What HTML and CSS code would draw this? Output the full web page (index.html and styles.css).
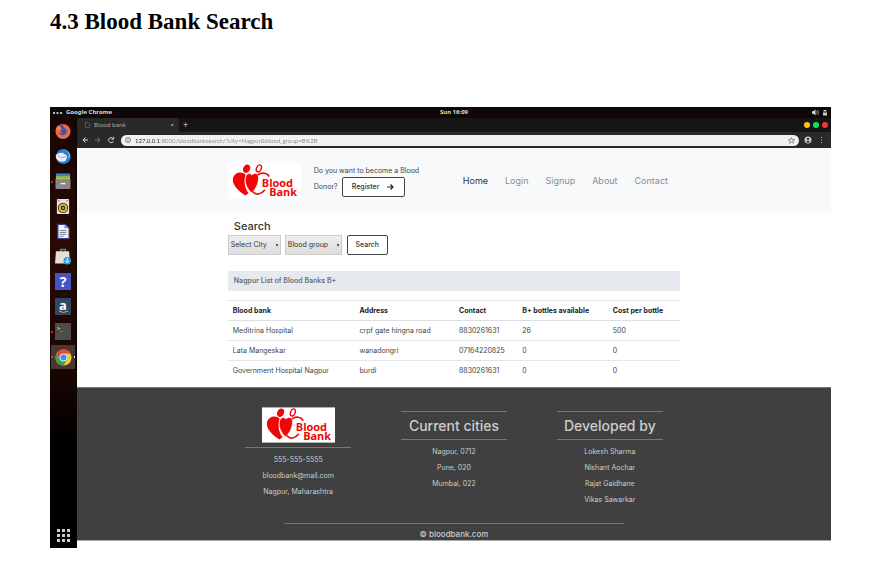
FILE: index.html
```html
<!DOCTYPE html>
<html lang="en">
<head>
<meta charset="utf-8">
<title>Blood Bank Search</title>
<link rel="stylesheet" href="styles.css">
</head>
<body>
<svg class="defs" aria-hidden="true">
  <symbol id="logo" viewBox="0 0 220 106">
    <rect width="220" height="106" fill="#fff"/>
    <g fill="#f20505">
      <ellipse cx="56" cy="16" rx="10" ry="13" transform="rotate(25 56 16)"/>
      <path d="M53 34C42 22 20 26 15 45C11 66 34 86 53 97L62 89C50 75 47 53 53 34Z"/>
      <path d="M72 35C81 25 94 31 92 47C91 64 82 79 71 89C58 76 51 62 52 47C53 31 65 26 72 35Z" stroke="#fff" stroke-width="2"/>
    </g>
    <g fill="none" stroke="#f20505" stroke-linecap="round">
      <ellipse cx="93" cy="15" rx="7" ry="11" stroke-width="4" transform="rotate(22 93 15)"/>
      <path d="M91 34C102 26 118 29 123 38" stroke-width="5"/>
      <path d="M76 86C85 96 99 94 110 81" stroke-width="5"/>
    </g>
    <g class="logo-text"><text x="102" y="71">Blood</text><text x="124" y="99">Bank</text></g>
  </symbol>
</svg>
<h1 class="doc-title">4.3 Blood Bank Search</h1>
<div class="desktop">
  <div class="topbar">
    <span class="app"><svg width="9" height="2" viewBox="0 0 9 2"><path d="M0 0h2v2H0zM3.500 0h2v2h-2zM7 0h2v2H7z" fill="#bbb"/></svg>Google Chrome</span>
    <span class="clock">Sun 16:09</span>
    <span class="tray">
      <svg width="16" height="7" viewBox="0 0 16 7"><path d="M0 2.300h1.500L3.500.500v6L1.500 4.700H0z" fill="#ddd"/><path d="M4.500 2q1 1.500 0 3M5.600 1q1.800 2.500 0 5" fill="none" stroke="#aaa" stroke-width=".7"/><path d="M11 3.500h4V6.500h-4zM11.500 1h3v1.500h-3z" fill="#ccc"/></svg>
    </span>
  </div>
  <div class="workspace">
    <nav class="dock" aria-label="Applications">
      <div class="apps">
        <span class="app-icon"><svg viewBox="0 0 17 17"><circle cx="8.500" cy="8.500" r="8" fill="#ee6847"/><path d="M5 2.500Q6 1 9 1.500Q8 3 10 4.500Q13 6 12.500 9Q11.500 12.500 8 12.500Q4.500 12 4 9Q6 10.500 8 9.500L6 8Q5.500 7 8 6.500Q6.500 5 5 2.500Z" fill="#3b58a5"/><path d="M1 6Q2 3 3 2Q4 4 6 4.500L5 7Z" fill="#f98356"/></svg></span>
        <span class="app-icon"><svg viewBox="0 0 17 17"><path d="M1 7Q3 0 10 .5Q17 3 16.500 10Q15 16 9 16.500Q5 16 3 14Z" fill="#277fd2"/><path d="M1 7Q4 4 8 4.500L13 8L11.500 13Q7 15 3.500 13Q0 11 1 7Z" fill="#e8eef3"/><path d="M3 7.500L7 10L12 8.500" fill="none" stroke="#9aabb9"/><path d="M10 1Q16 4 14 11Q17 9 16 6Q14 2 10 1Z" fill="#68b4ec"/></svg></span>
        <span class="app-icon running"><svg viewBox="0 0 17 17"><path d="M1 0h15v2H1z" fill="#3e86ca"/><path d="M1 2h15v2H1z" fill="#76bd5b"/><path d="M1 4h15v2H1z" fill="#ecc547"/><rect x=".500" y="5.500" width="16" height="11" rx="1" fill="#888"/><path d="M6 10h5v1.500H6z" fill="#eee"/></svg></span>
        <span class="app-icon"><svg viewBox="0 0 17 17"><rect x="2" y=".5" width="13" height="16" rx="1" fill="#e6e3df"/><path d="M3 2h2v1H3zM12 2h2v1h-2z" fill="#555"/><circle cx="8.500" cy="10" r="5.500" fill="#39393b"/><circle cx="8.500" cy="10" r="3.500" fill="none" stroke="#edb72d" stroke-width="2"/><circle cx="8.500" cy="10" r="1" fill="#edb72d"/></svg></span>
        <span class="app-icon"><svg viewBox="0 0 17 17"><path d="M3 1h8l4 4v11H3z" fill="#f1f1f4" stroke="#303b93" stroke-width="1.300"/><path d="M10 1v4h5z" fill="#8590d5"/><path d="M5 7.500h7M5 9.500h7M5 11.500h7M5 13.500h4" stroke="#6c7180" stroke-width=".900"/></svg></span>
        <span class="app-icon"><svg viewBox="0 0 17 17"><path d="M6 4V1h5v3" fill="none" stroke="#777" stroke-width="1.500"/><path d="M1 3h14l1 13H0z" fill="#e4e0d9"/><circle cx="13" cy="13" r="4" fill="#309fd9"/><path d="M13 10v4M11 13l2 2 2-2" fill="none" stroke="#fff"/></svg></span>
        <span class="app-icon help">?</span>
        <span class="app-icon amazon">a<svg viewBox="0 0 17 17"><path d="M4 13Q8.500 16 13 13" fill="none" stroke="#e7a13d"/></svg></span>
        <span class="app-icon terminal running">&gt;_</span>
        <span class="app-icon running active"><svg viewBox="0 0 18 18"><circle cx="9" cy="9" r="8.500" fill="#f1c936"/><path d="M1.640 4.750A8.500 8.500 0 0 1 16.360 4.750H9A4.250 4.250 0 0 0 5.300 11.100Z" fill="#df4c3b"/><path d="M1.640 4.750A8.500 8.500 0 0 0 9 17.500L12.700 11.100A4.250 4.250 0 0 1 5.300 11.100Z" fill="#31a35b"/><circle cx="9" cy="9" r="4" fill="#f3f4f5"/><circle cx="9" cy="9" r="3.200" fill="#4589ec"/></svg></span>
      </div>
      <svg class="grid-icon" viewBox="0 0 13 13"><path d="M0 0h3v3H0zM5 0h3v3H5zM10 0h3v3h-3zM0 5h3v3H0zM5 5h3v3H5zM10 5h3v3h-3zM0 10h3v3H0zM5 10h3v3H5zM10 10h3v3h-3z" fill="#ccc"/></svg>
    </nav>
    <div class="browser">
      <div class="tabs">
        <div class="tab"><svg width="5" height="6" viewBox="0 0 5 6"><path d="M.5.5h2.500l1.500 1.500v3.500h-4z" fill="none" stroke="#666" stroke-width=".7"/></svg><span>Blood bank</span><span class="close">×</span></div>
        <span class="plus">+</span>
        <div class="lights"><i class="yellow"></i><i class="green"></i><i class="red"></i></div>
      </div>
      <div class="toolbar">
        <svg class="arrows" width="33" height="8" viewBox="0 0 33 8" fill="none"><path d="M6 4H1M3.500 1.500L1 4l2.500 2.500" stroke="#ddd"/><path d="M13 4h5M15.500 1.500L18 4l-2.500 2.500" stroke="#777"/><path d="M31 2.500A2.500 2.500 0 1 0 31.500 5M31.700.8v2.400h-2.400" stroke="#ccc"/></svg>
        <div class="address">
          <svg width="6" height="6" viewBox="0 0 6 6" fill="none"><circle cx="3" cy="3" r="2.500" stroke="#555" stroke-width=".7"/><path d="M3 1.300v.7M3 2.600v2" stroke="#555" stroke-width=".8"/></svg>
          <input type="text" aria-label="Address" value="127.0.0.1:8000/bloodbanksearch/?city=Nagpur&amp;blood_group=B%2B">
          <svg width="7" height="7" viewBox="0 0 7 7"><path d="M3.500.6l.8 2 2.200.1-1.700 1.400.6 2.100-1.900-1.200-1.900 1.200.6-2.100L.5 2.700l2.200-.1z" fill="none" stroke="#666" stroke-width=".7"/></svg>
        </div>
        <svg class="menu" width="22" height="8" viewBox="0 0 22 8"><circle cx="4" cy="4" r="3.500" fill="#ccc"/><circle cx="4" cy="3" r="1.200" fill="#333"/><path d="M1.800 5.700q2.200-1.600 4.400 0Q4 7.800 1.800 5.700" fill="#333"/><path d="M17 1h1v1h-1zM17 3.500h1v1h-1zM17 6h1v1h-1z" fill="#aaa"/></svg>
      </div>
      <div class="page">
        <header class="site-header">
          <div class="container header-row">
            <svg class="logo" role="img" aria-label="Blood Bank"><use href="#logo"/></svg>
            <div class="promo">Do you want to become a Blood<div class="promo-line">Donor? <button type="button" class="btn register">Register <svg width="7" height="6" viewBox="0 0 7 6"><path d="M0 3h6M3.500.5L6 3 3.500 5.500" fill="none" stroke="#222" stroke-width="1.200"/></svg></button></div></div>
            <nav class="links"><a class="current" href="#">Home</a><a href="#">Login</a><a href="#">Signup</a><a href="#">About</a><a href="#">Contact</a></nav>
          </div>
        </header>
        <main class="container">
          <h2 class="search-title">Search</h2>
          <form class="search">
            <div class="pick city"><select aria-label="City"><option>Select City</option></select></div>
            <div class="pick group"><select aria-label="Blood group"><option>Blood group</option></select></div>
            <button type="button" class="btn find">Search</button>
          </form>
          <div class="notice">Nagpur List of Blood Banks B+</div>
          <table>
            <colgroup><col class="c1"><col class="c2"><col class="c3"><col class="c4"><col></colgroup>
            <thead><tr><th>Blood bank</th><th>Address</th><th>Contact</th><th>B+ bottles available</th><th>Cost per bottle</th></tr></thead>
            <tbody>
              <tr><td>Meditrina Hospital</td><td>crpf gate hingna road</td><td>8830261631</td><td>26</td><td>500</td></tr>
              <tr><td>Lata Mangeskar</td><td>wanadongri</td><td>07164220825</td><td>0</td><td>0</td></tr>
              <tr><td>Government Hospital Nagpur</td><td>burdi</td><td>8830261631</td><td>0</td><td>0</td></tr>
            </tbody>
          </table>
        </main>
        <footer>
          <div class="columns">
            <section class="brand"><svg class="logo" role="img" aria-label="Blood Bank"><use href="#logo"/></svg><hr><p>555-555-5555</p><p>bloodbank@mail.com</p><p>Nagpur, Maharashtra</p></section>
            <section class="list"><h3>Current cities</h3><p>Nagpur, 0712</p><p>Pune, 020</p><p>Mumbai, 022</p></section>
            <section class="list"><h3>Developed by</h3><p>Lokesh Sharma</p><p>Nishant Aochar</p><p>Rajat Gaidhane</p><p>Vikas Sawarkar</p></section>
          </div>
          <div class="copyright">© bloodbank.com</div>
        </footer>
      </div>
    </div>
  </div>
</div>
</body>
</html>
```
FILE: styles.css
```css
* { box-sizing: border-box; }
body { margin: 0; padding: 8px 52px 0 50px; background: #fff; color: #444; font-family: Inter, sans-serif; font-size: 7px; }
.defs { position: absolute; width: 0; height: 0; }
.doc-title { margin: 0 0 71px; font: bold 23px/28px "Liberation Serif", serif; color: #000; }
.topbar { display: grid; grid-template-columns: 1fr auto 1fr; align-items: center; height: 11px; padding: 0 3px; background: #100806; color: #ddd; font: bold 6px/11px "Noto Sans", sans-serif; }
.app { display: flex; align-items: center; gap: 4px; }
.clock { padding-left: 27px; }
.tray { display: flex; justify-content: flex-end; }
.workspace { display: flex; }
.dock { flex: none; display: flex; flex-direction: column; justify-content: space-between; align-items: center; width: 27px; padding: 5px 0 6px; background: linear-gradient(#180502, #280a04 30%, #180502 60%, #000 75%); border-right: 1px solid #090302; }
.apps { display: flex; flex-direction: column; align-items: stretch; align-self: stretch; }
.app-icon { position: relative; display: flex; align-items: center; justify-content: center; height: 17px; margin: 0 5px 8px; color: #fff; }
.app-icon svg { width: 17px; height: 17px; }
.help { background: #4354c5; font: bold 14px/17px "Noto Sans", sans-serif; }
.amazon { background: #30475f; font: bold 13px/14px "Noto Sans", sans-serif; padding-bottom: 3px; }
.amazon svg { position: absolute; top: 0; }
.terminal { justify-content: flex-start; background: #4c4c49; padding: 0 2px 7px; font: 5px/6px "DejaVu Sans Mono", monospace; }
.running::before { content: ""; position: absolute; left: -4px; top: 8px; width: 2px; height: 2px; border-radius: 50%; background: #db4c26; }
.active { height: 24px; margin: -3px 1px 0; background: #4b3532; }
.active::before { left: 0; top: 11px; }
.active::after { content: ""; position: absolute; right: 0; top: 11px; width: 1px; height: 2px; background: #ddd; }
.grid-icon { width: 13px; height: 13px; }
.browser { flex: 1; min-width: 0; padding-bottom: 7px; }
.tabs { display: flex; align-items: center; height: 14px; background: #151515; color: #aaa; font: 6px/14px "Noto Sans", sans-serif; }
.tab { display: flex; align-items: center; gap: 4px; width: 102px; height: 14px; padding: 0 5px 0 8px; background: #292929; border-radius: 3px 3px 0 0; }
.close { margin-left: auto; color: #ccc; }
.plus { margin-left: 4px; color: #ddd; font-size: 9px; }
.lights { display: flex; gap: 3px; margin: 0 3px 0 auto; }
.lights i { width: 6px; height: 6px; border-radius: 50%; }
.yellow { background: #f9c80e; }
.green { background: #0be65a; }
.red { background: #fb3434; }
.toolbar { display: flex; align-items: center; height: 16px; padding: 0 5px; background: #292929; }
.address { flex: 1; display: flex; align-items: center; height: 11px; margin: 0 5px 0 6px; padding: 0 4px; border-radius: 6px; background: #f0f1f3; }
.address input { flex: 1; min-width: 0; height: 11px; margin: 0 4px; padding: 0; border: 0; outline: 0; font: 6px/11px Lato, sans-serif; color: transparent; background: linear-gradient(90deg, #222 25px, #888 25px) text; -webkit-background-clip: text; }
.container { width: 60%; margin: 0 auto; }
.site-header { padding: 15px 0 14px; background: #f8f9fb; }
.header-row { display: flex; align-items: center; }
.logo { flex: none; display: block; width: 73px; height: 36px; }
.logo-text { font: bold 33px "Open Sans", sans-serif; fill: #f20505; }
.promo { width: 110px; margin: 0 39px 0 13px; white-space: nowrap; line-height: 12px; }
.promo-line { display: flex; align-items: center; gap: 4px; }
.btn { height: 20px; border: 1px solid #444; border-radius: 2px; background: #fff; color: #333; font: 500 7px/10px Inter, sans-serif; padding: 0; }
.register { display: flex; align-items: center; justify-content: center; gap: 8px; width: 63px; }
.links { display: flex; gap: 17px; font-size: 9px; line-height: 12px; }
.links a { color: #8b8b8b; text-decoration: none; }
.links .current { color: #333; }
main { min-height: 174px; padding-top: 6px; }
.search-title { margin: 0 0 2px 6px; font-size: 11px; line-height: 14px; font-weight: 500; color: #333; }
.search { display: flex; gap: 4px; margin-bottom: 16px; }
.pick { position: relative; }
.pick::after { content: ""; position: absolute; right: 3px; top: 9px; border: 1px solid transparent; border-top: 3px solid #222; border-bottom: 0; }
.city { width: 53px; }
.group { width: 57px; }
.pick select { appearance: none; display: block; width: 100%; height: 20px; padding: 0 0 0 2px; border: 1px solid #ccc; border-radius: 0; background: linear-gradient(#eee, #ddd); color: #333; font: 7px/12px Inter, sans-serif; }
.find { width: 41px; margin-left: 1px; }
.notice { height: 20px; margin-bottom: 9px; padding: 0 6px; border-radius: 1px; background: #e6e9ee; color: #6a7078; font-size: 7px; line-height: 20px; font-weight: 600; }
table { width: 100%; table-layout: fixed; border-collapse: collapse; }
.c1 { width: 28%; }
.c2 { width: 22%; }
.c3 { width: 14%; }
.c4 { width: 20%; }
th, td { height: 20px; padding: 0 5px; border-top: 1px solid #e4e6e8; text-align: left; white-space: nowrap; line-height: 10px; }
th { padding-right: 0; font-size: 7px; font-weight: 700; color: #222; }
thead th { border-bottom: 1px solid #dcdfe2; }
footer { border-top: 1px solid #777; border-bottom: 1px solid #aaa; background: #404040; color: #ccc; text-align: center; }
.columns { display: grid; grid-template-columns: repeat(3, 1fr); width: 62%; min-height: 135px; margin: 0 auto; padding-top: 19px; }
.columns section { display: flex; flex-direction: column; align-items: center; }
.columns hr { width: 68%; margin: 4px 0 4px; border: 0; border-top: 1px solid #777; }
.columns p { margin: 0; line-height: 16px; }
.list h3 { width: 68%; margin: 4px 0 4px; border: solid #777; border-width: 1px 0; font-size: 14px; line-height: 27px; font-weight: 500; white-space: nowrap; }
.copyright { width: 45%; margin: 0 auto; padding-top: 4px; border-top: 1px solid #777; font-size: 8px; line-height: 12px; font-weight: 500; }
```
